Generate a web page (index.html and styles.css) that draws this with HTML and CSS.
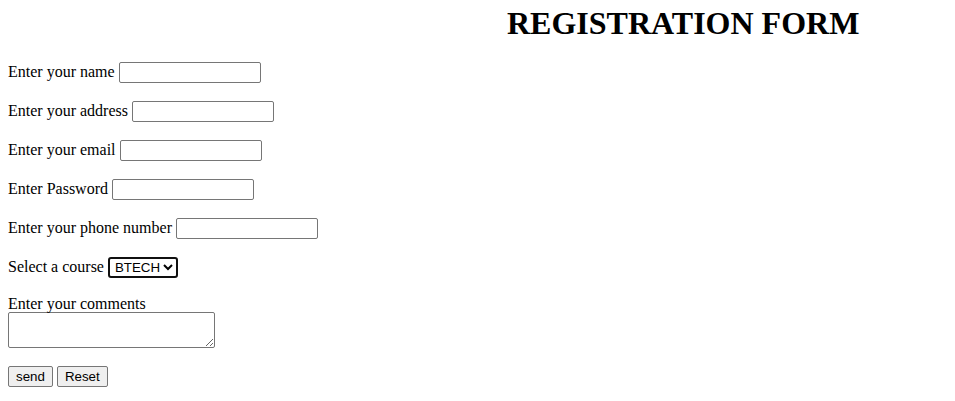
FILE: index.html
```html
<!DOCTYPE html>
<html>
<head>
<meta charset="utf-8">
<title>Registration Form</title>
<link rel="stylesheet" href="styles.css">
</head>
<body>
<h1 class="title">REGISTRATION FORM</h1>
<form class="form">
  <p class="row">Enter your name <input class="field" type="text"></p>
  <p class="row">Enter your address <input class="field" type="text"></p>
  <p class="row">Enter your email <input class="field" type="email"></p>
  <p class="row">Enter Password <input class="field" type="password"></p>
  <p class="row">Enter your phone number <input class="field" type="text"></p>
  <p class="row">Select a course <select class="course"><option>BTECH</option><option>MTECH</option><option>MBA</option></select></p>
  <p class="row row-comments">Enter your comments<br><textarea class="comments"></textarea></p>
  <p class="row"><button class="btn" type="button">send</button> <button class="btn" type="reset">Reset</button></p>
</form>
</body>
</html>
```
FILE: styles.css
```css
html, body {
  background: #fff;
}
body {
  margin: 5px 8px 8px;
  font-family: "Liberation Serif", "Times New Roman", serif;
  font-size: 16px;
  color: #000;
}
.title {
  margin: 0 0 19px 499px;
  font-size: 32px;
  line-height: 37px;
  font-weight: bold;
}
.form {
  margin: 0;
}
.row {
  margin: 16px 0;
}
.row-comments {
  padding-bottom: 1px;
}
.field {
  box-sizing: border-box;
  width: 142px;
  height: 21px;
  margin: 1px 0;
  border: 1px solid #767676;
  border-radius: 2px;
  padding: 1px 2px;
  font-family: "Liberation Sans", Arial, sans-serif;
  font-size: 13.33px;
  background: #fff;
}
.course {
  box-sizing: border-box;
  height: 21px;
  width: 70px;
  margin: 1px 0;
  border: 2px solid #101010;
  border-radius: 3px;
  font-family: "Liberation Sans", Arial, sans-serif;
  font-size: 13.33px;
  color: #000;
  background: #fff;
  padding: 0 0 0 1px;
}
.comments {
  display: block;
  box-sizing: border-box;
  width: 207px;
  height: 36px;
  border: 1px solid #767676;
  border-radius: 2px;
  font-family: "Liberation Mono", monospace;
  font-size: 13.33px;
  margin: -1px 0 0;
}
.btn {
  box-sizing: border-box;
  height: 21px;
  margin: 1px 0;
  border: 1px solid #767676;
  border-radius: 2px;
  background: #efefef;
  font-family: "Liberation Sans", Arial, sans-serif;
  font-size: 13.33px;
  color: #000;
  padding: 1px 7px;
}
```
